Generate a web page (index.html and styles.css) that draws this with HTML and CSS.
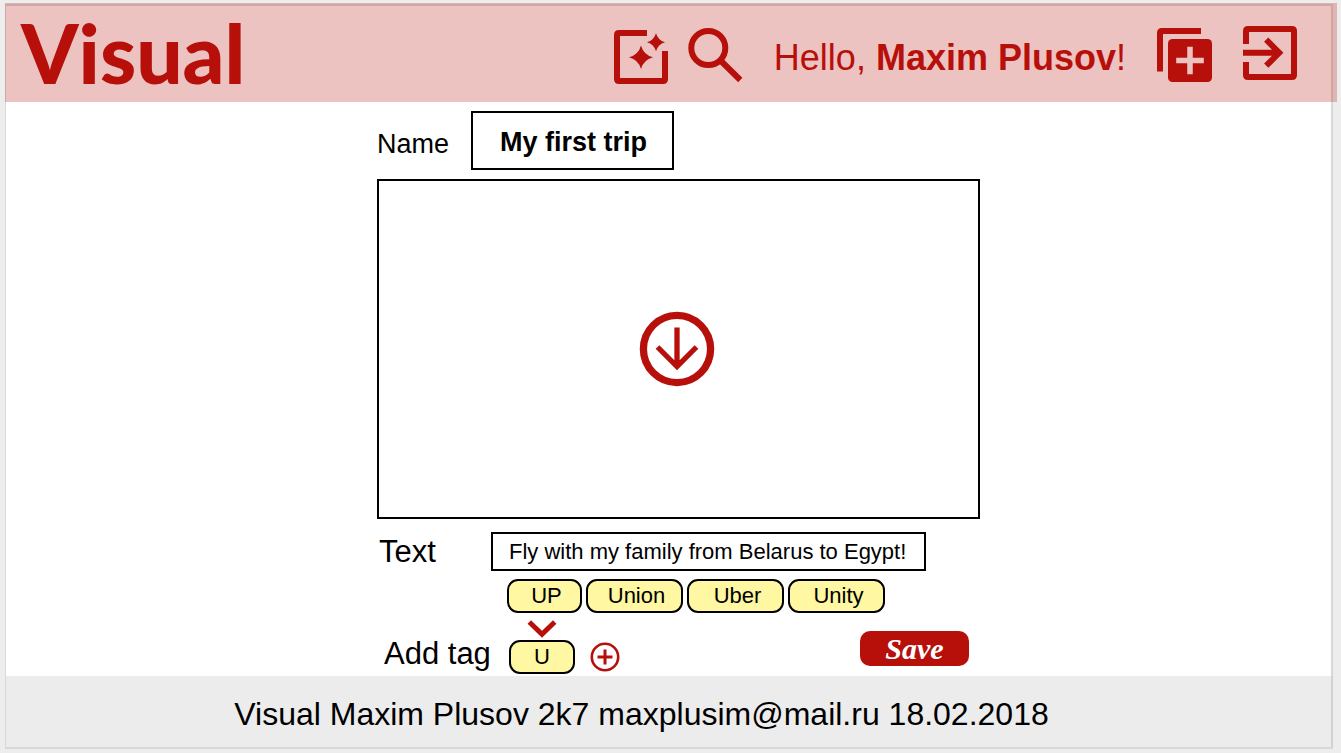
FILE: index.html
```html
<!DOCTYPE html>
<html lang="en">
<head>
<meta charset="utf-8">
<meta name="viewport" content="width=device-width, initial-scale=1">
<title>Visual</title>
<link rel="stylesheet" href="styles.css">
</head>
<body>
<div class="frame">
  <header class="header">
    <a class="logo" href="#">Visual</a>
    <nav class="nav">
      <a class="icon-link" href="#" aria-label="Effects">
        <svg viewBox="0 0 60 60"><path class="line" d="M36 8H8q-2 0-2 2v44q0 2 2 2h44q2 0 2-2V26"/><path class="solid" d="M30 20.500Q32.500 29.800 42 32.300 32.500 34.800 30 44 27.500 34.800 18 32.300 27.500 29.800 30 20.500ZM45 8.300Q47 15.300 54 17.300 47 19.300 45 26.300 43 19.300 36 17.300 43 15.300 45 8.300Z"/></svg>
      </a>
      <a class="icon-link" href="#" aria-label="Search">
        <svg viewBox="0 0 60 60"><circle class="line" cx="22.300" cy="23" r="17"/><path class="line" d="M35 36L54.300 55"/></svg>
      </a>
    </nav>
    <p class="greeting">Hello, <strong>Maxim Plusov</strong>!</p>
    <nav class="nav nav-account">
      <a class="icon-link" href="#" aria-label="New post">
        <svg viewBox="0 0 60 60"><path class="line" d="M47 6H8q-2 0-2 2V46.500"/><rect class="solid" x="14" y="14" width="44" height="43" rx="4.500"/><path class="cut" d="M22.200 35.500h27.600M36 21.700v27.600"/></svg>
      </a>
      <a class="icon-link" href="#" aria-label="Log out">
        <svg viewBox="0 0 60 60"><path class="line" d="M6 19V6q0-2 2-2h44q2 0 2 2v44q0 2-2 2H8q-2 0-2-2V37"/><path class="line" d="M3 27.700h36M26.200 14.700l13 13-13 13"/></svg>
      </a>
    </nav>
  </header>

  <main class="main">
    <form class="form">
      <div class="row">
        <label class="label-name" for="name">Name</label>
        <input class="field field-name" id="name" type="text" value="My first trip">
      </div>
      <button class="drop" type="button" aria-label="Upload picture">
        <svg class="drop-icon" viewBox="0 0 76 76"><circle cx="38" cy="38" r="33.600" stroke-width="7.300"/><path stroke-width="5.300" d="M38 16.500V56M18.500 36L38 55.500 57.500 36"/></svg>
      </button>
      <div class="row">
        <label class="label-text" for="text">Text</label>
        <input class="field field-text" id="text" type="text" value="Fly with my family from Belarus to Egypt!">
      </div>
      <div class="tags">
        <button class="tag tag-short" type="button">UP</button>
        <button class="tag" type="button">Union</button>
        <button class="tag" type="button">Uber</button>
        <button class="tag" type="button">Unity</button>
      </div>
      <div class="add-row">
        <label class="label-tag" for="tag">Add tag</label>
        <div class="tag-entry">
          <svg class="chevron" viewBox="0 0 30 18"><path stroke-width="5" d="M2.300 2L15 14.300 27.700 2"/></svg>
          <input class="tag tag-input" id="tag" type="text" value="U">
        </div>
        <button class="plus" type="button" aria-label="Add tag">
          <svg viewBox="0 0 30 30"><circle cx="15" cy="15" r="13.200" stroke-width="2.600"/><path stroke-width="3" d="M7.500 15h15M15 7.500v15"/></svg>
        </button>
        <button class="save" type="submit">Save</button>
      </div>
    </form>
  </main>

  <footer class="footer">Visual Maxim Plusov 2k7 maxplusim@mail.ru 18.02.2018</footer>
</div>
</body>
</html>
```
FILE: styles.css
```css
* {
  box-sizing: border-box;
}

:root {
  --red: #b70f0a;
  --pink: #edc3c2;
}

body {
  margin: 0;
  min-height: 100vh;
  padding: 4px 8px 4px 5px;
  display: flex;
  flex-direction: column;
  background: #ededed;
  color: #000;
  font-family: "Liberation Sans", Arial, sans-serif;
}

button,
input {
  margin: 0;
  font-family: inherit;
  color: inherit;
}

button {
  cursor: pointer;
}

svg {
  display: block;
  fill: none;
  stroke: var(--red);
}

.frame {
  flex: 1;
  display: flex;
  flex-direction: column;
  background: #fff;
  border: 2px solid #d8d8d8;
  border-left-width: 1px;
}

/* Header */
.header {
  display: flex;
  align-items: center;
  min-height: 99px;
  margin: -3px -6px 0 -1px;
  padding: 5px 37px 0 16px;
  background: rgba(183, 15, 10, 0.25);
  color: var(--red);
}

.logo {
  margin-right: auto;
  padding-bottom: 6px;
  font-family: Lato, sans-serif;
  font-size: 82px;
  font-weight: 900;
  line-height: 84px;
  color: inherit;
  text-decoration: none;
}

.nav {
  display: flex;
  gap: 15px;
}

.nav-account {
  gap: 26px;
}

.icon-link {
  width: 60px;
  height: 60px;
}

.line {
  stroke-width: 6;
}

.solid {
  fill: var(--red);
  stroke: none;
}

.cut {
  stroke: var(--pink);
  stroke-width: 5.5;
}

.greeting {
  margin: 0 28px;
  padding-top: 6px;
  font-size: 36px;
  line-height: 40px;
  white-space: nowrap;
}

/* Form */
.main {
  flex: 1;
  display: flex;
  justify-content: center;
  padding: 9px 0 2px 20px;
}

.form {
  display: flex;
  flex-direction: column;
  width: 100%;
  max-width: 603px;
}

.row {
  display: flex;
  align-items: center;
}

.label-name {
  width: 94px;
  padding-top: 8px;
  font-size: 27px;
}

.label-text {
  width: 114px;
  padding-left: 2px;
  font-size: 31px;
}

.field {
  border: 2px solid #000;
  background: #fff;
  outline: none;
}

.field-name {
  width: 203px;
  height: 59px;
  padding: 4px 14px 0 16px;
  font-size: 27px;
  font-weight: bold;
  text-align: center;
}

.field-text {
  width: 435px;
  height: 39px;
  padding: 0 16px;
  font-size: 22px;
}

.drop {
  display: flex;
  align-items: center;
  justify-content: center;
  height: 340px;
  margin: 9px 0 13px;
  padding: 0 4px 0 0;
  border: 2px solid #000;
  background: #fff;
}

.drop-icon {
  width: 76px;
  height: 76px;
}

/* Tags */
.tags {
  display: flex;
  gap: 4px;
  padding: 8px 0 5px 130px;
}

.tag {
  width: 97px;
  height: 34px;
  padding: 0 0 0 4px;
  border: 2px solid #000;
  border-radius: 11px;
  background: #fff7a1;
  font-size: 22px;
  text-align: center;
}

.tag-short {
  width: 75px;
}

.add-row {
  display: flex;
  align-items: flex-end;
  height: 56px;
}

.label-tag {
  width: 132px;
  padding-left: 7px;
  font-size: 31px;
  line-height: 40px;
}

.tag-entry {
  display: flex;
  flex-direction: column;
  gap: 2px;
}

.chevron {
  width: 30px;
  height: 18px;
  margin-left: 18px;
}

.tag-input {
  width: 66px;
  padding: 0;
  outline: none;
}

.plus {
  width: 30px;
  height: 30px;
  margin: 0 0 2px 15px;
  padding: 0;
  border: 0;
  background: none;
}

.save {
  align-self: flex-start;
  width: 109px;
  height: 35px;
  margin: 13px 11px 0 auto;
  padding: 0;
  border: 0;
  border-radius: 10px;
  background: var(--red);
  color: #fff;
  font-family: "Liberation Serif", serif;
  font-size: 30px;
  font-style: italic;
  font-weight: bold;
  line-height: 34px;
}

.footer {
  margin: 0 -2px 0 0;
  padding: 20px 56px 15px 0;
  background: rgba(200, 200, 200, 0.35);
  font-size: 32px;
  line-height: 36px;
  text-align: center;
}
```
